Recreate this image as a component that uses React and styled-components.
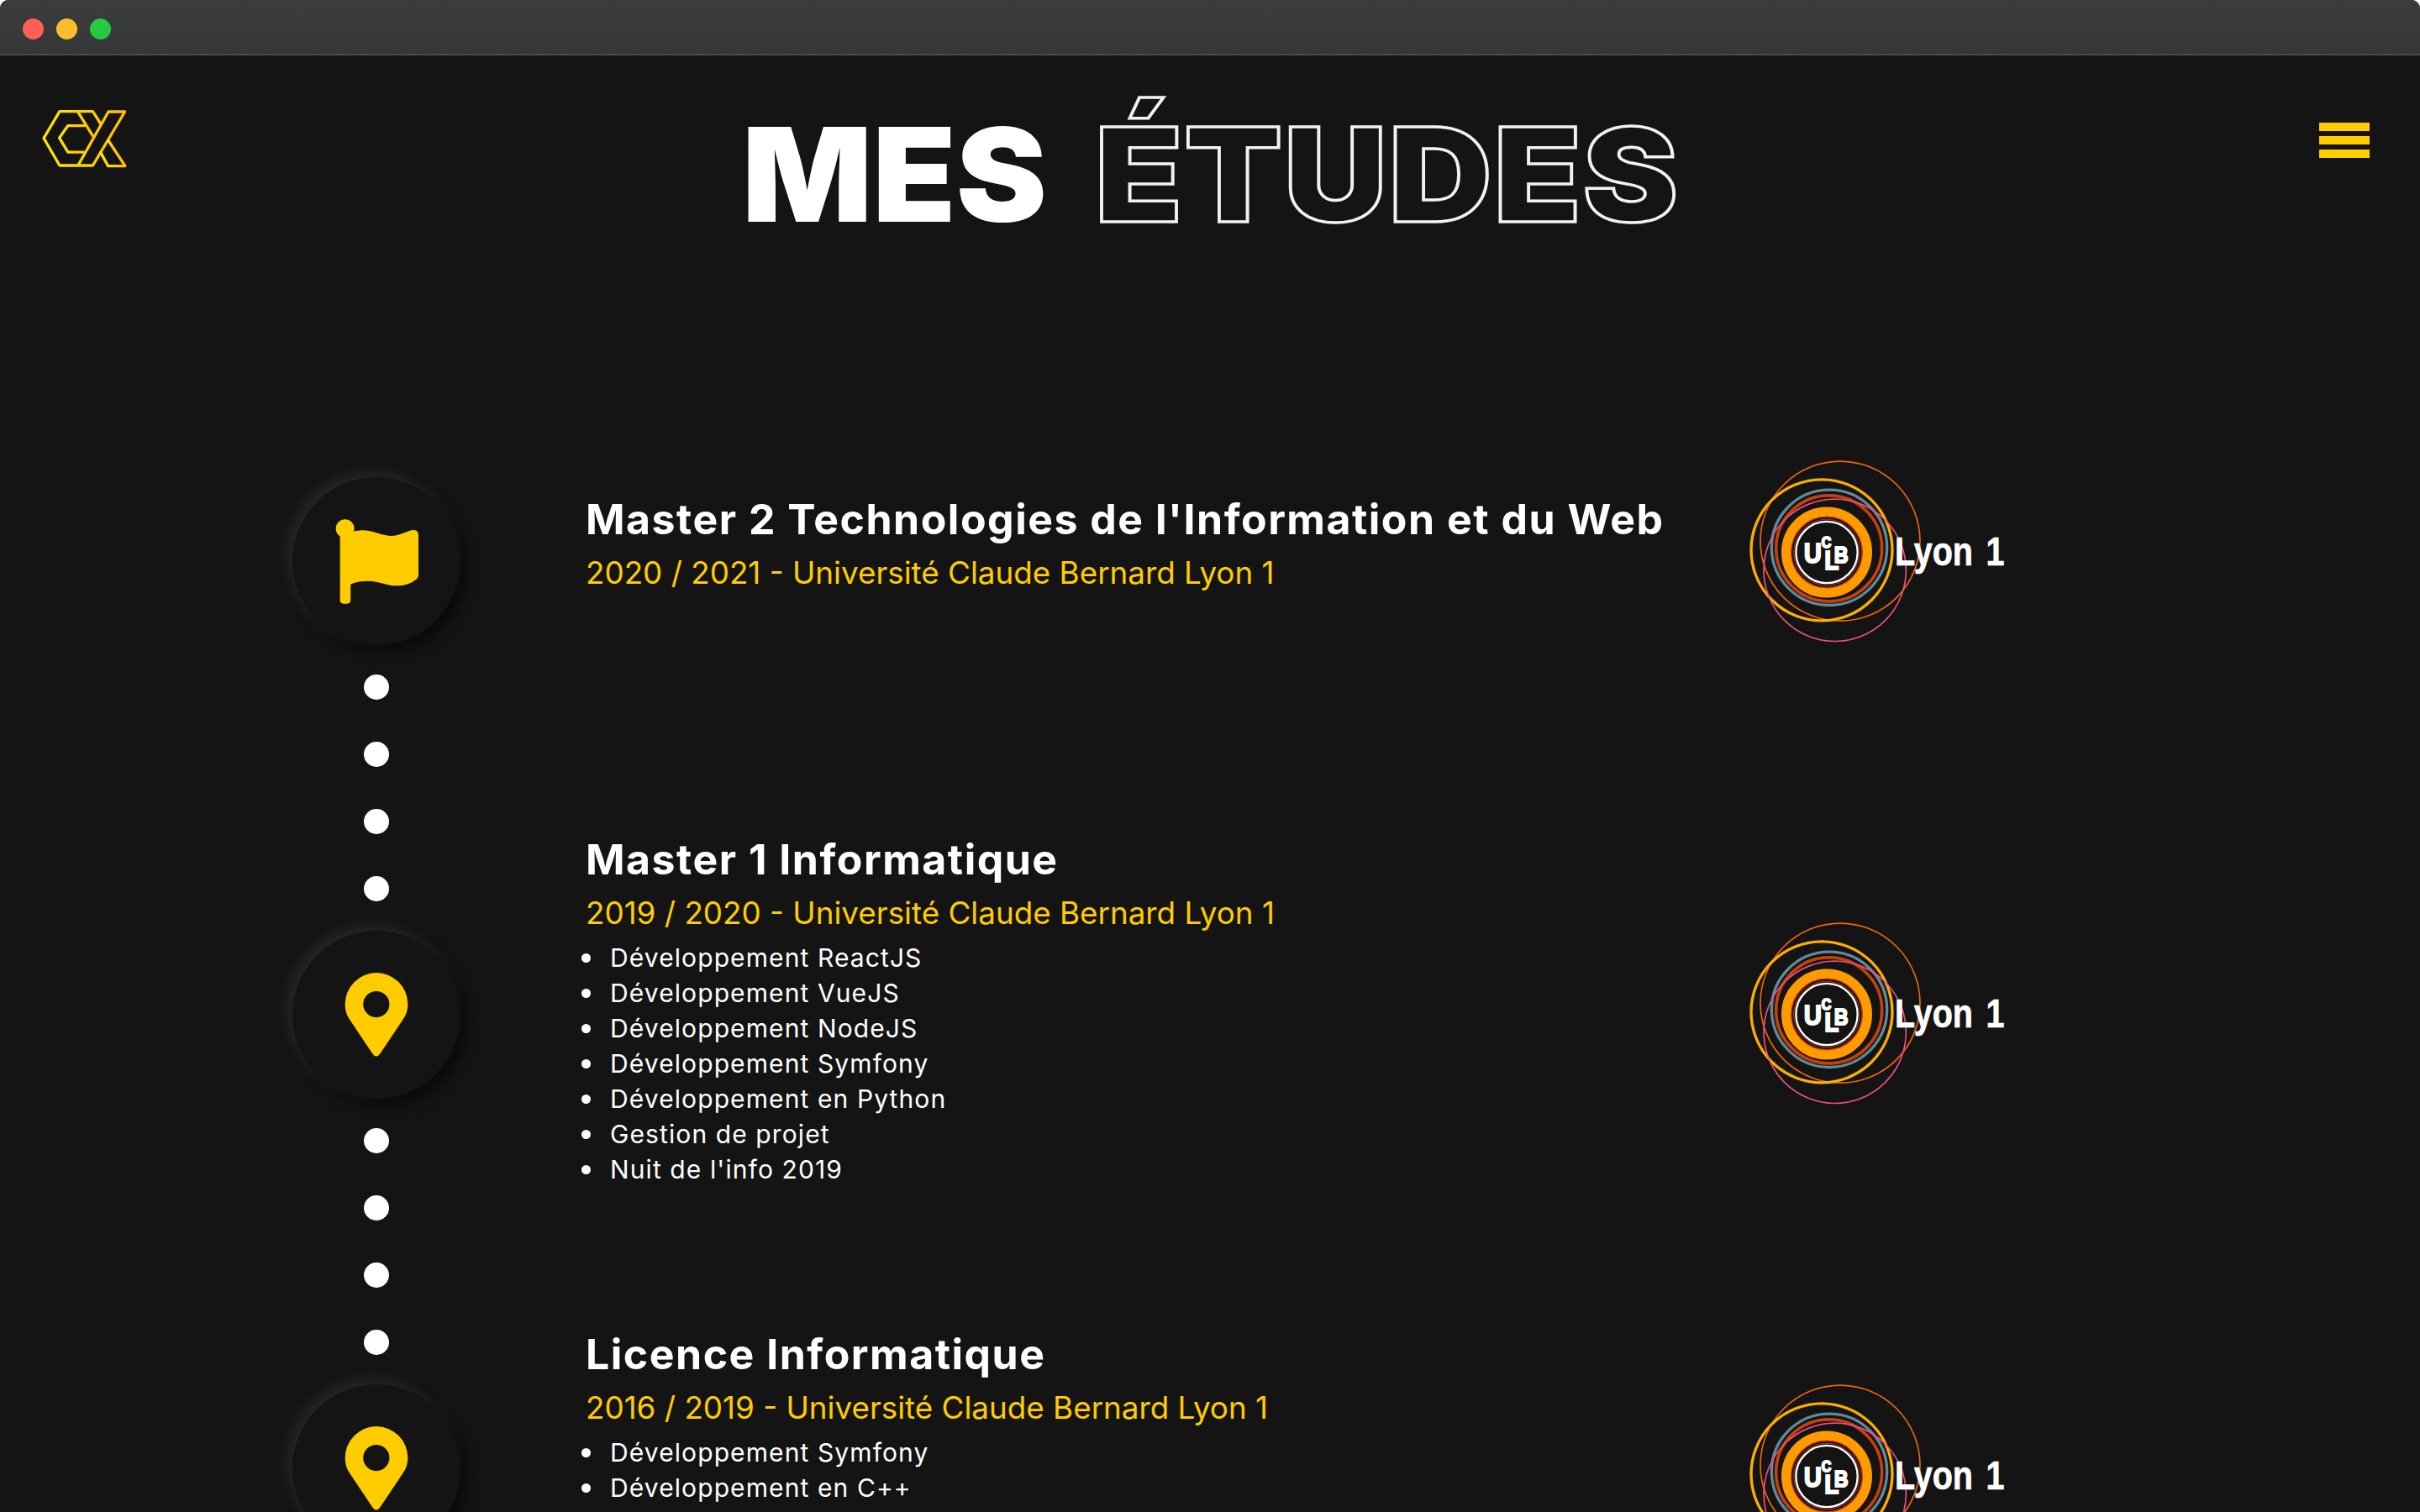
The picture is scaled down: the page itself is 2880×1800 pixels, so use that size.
import React from "react";
import styled, { createGlobalStyle } from "styled-components";

const Global = createGlobalStyle`
  html, body { margin: 0; padding: 0; background: #fff; }
  #root { height: 1800px; overflow: hidden; }
`;

const Window = styled.div`
  height: 1800px;
  overflow: hidden;
  background: #141414;
  border-radius: 10px 10px 0 0;
  font-family: Inter, "Open Sans", sans-serif;
  color: #fff;
`;

const TitleBar = styled.div`
  height: 66px;
  border-bottom: 2px solid #4a4b4d;
  background: linear-gradient(#3b3c3e, #363739);
  display: flex;
  align-items: center;
  gap: 15px;
  padding: 4px 0 0 27px;
  box-sizing: border-box;
`;

const Light = styled.span`
  width: 25px;
  height: 25px;
  border-radius: 50%;
  background: ${(p) => p.$color};
`;

const Header = styled.header`
  height: 317px;
  display: grid;
  grid-template-columns: 836px auto 1fr;
  align-items: start;
  padding: 0 60px 0 47px;
`;

const LogoLink = styled.a`
  display: block;
  margin-top: 62px;
  line-height: 0;
`;

const Title = styled.h1`
  margin: 64px 0 0;
  font-size: 155px;
  line-height: 1;
  font-weight: 900;
  white-space: nowrap;
  display: flex;
`;

const SolidWord = styled.span`
  display: inline-block;
  transform: scaleX(1.048);
  transform-origin: left center;
  margin-right: 74px;
`;

const Outline = styled.span`
  display: inline-block;
  color: transparent;
  -webkit-text-stroke: 3.5px #f2f2f2;
  letter-spacing: 1.5px;
  transform: scaleX(1.1);
  transform-origin: left center;
`;

const Burger = styled.button`
  justify-self: end;
  margin-top: 80px;
  padding: 0;
  border: 0;
  background: none;
  display: flex;
  flex-direction: column;
  gap: 6px;
`;

const BurgerBar = styled.span`
  display: block;
  width: 60px;
  height: 10px;
  background: #ffcc00;
`;

const Main = styled.main`
  display: flex;
  padding-left: 348px;
`;

const Timeline = styled.div`
  width: 200px;
  flex: none;
  padding-top: 185px;
  margin-right: 149px;
  display: flex;
  flex-direction: column;
  align-items: center;
`;

const Badge = styled.div`
  width: 200px;
  height: 200px;
  flex: none;
  border-radius: 50%;
  background: #141414;
  box-shadow: -6px -6px 16px rgba(255, 255, 255, 0.09),
    8px 8px 16px rgba(0, 0, 0, 0.55);
  display: flex;
  align-items: center;
  justify-content: center;
`;

const Dots = styled.div`
  display: flex;
  flex-direction: column;
  gap: 50px;
  padding: 35px 0;
`;

const Dot = styled.span`
  display: block;
  width: 30px;
  height: 30px;
  border-radius: 50%;
  background: #fff;
`;

const Rows = styled.div`
  flex: 1;
  display: flex;
  flex-direction: column;
`;

const Row = styled.section`
  height: 550px;
  flex: none;
  display: grid;
  grid-template-columns: 1383px auto;
  align-items: center;
`;

const Info = styled.div`
  display: flex;
  flex-direction: column;
`;

const Name = styled.h2`
  margin: 0;
  font-size: 50px;
  line-height: 60px;
  font-weight: 700;
  letter-spacing: 1.5px;
  white-space: nowrap;
`;

const Period = styled.p`
  margin: 4px 0 0;
  font-size: 36.8px;
  line-height: 60px;
  font-weight: 400;
  color: #ffcc00;
  white-space: nowrap;
`;

const List = styled.ul`
  margin: 2px 0 0 -5px;
  padding: 0 0 10px;
  box-sizing: border-box;
  list-style: none;
  min-height: ${(p) => p.$minHeight || "14px"};
  font-size: 30px;
  line-height: 42px;
  letter-spacing: 1.1px;
`;

const Item = styled.li`
  display: flex;
  align-items: center;
  gap: 23px;
  white-space: nowrap;

  &::before {
    content: "";
    width: 11px;
    height: 11px;
    flex: none;
    border-radius: 50%;
    background: #fff;
  }
`;

const LogoMark = styled.svg`
  margin-top: -3px;
`;

const CxLogo = () => (
  <svg width="107" height="73" viewBox="140 385 320 220" fill="none">
    <defs>
      <linearGradient id="cxg" x1="0" x2="1" y1="0" y2="0">
        <stop offset="0" stopColor="#ffe600" />
        <stop offset="1" stopColor="#ffbf00" />
      </linearGradient>
    </defs>
    <g stroke="url(#cxg)" strokeWidth="10" strokeLinejoin="round" strokeLinecap="round">
      <path d="M358 443L330 399H211L154 495L211 593H330L445 400H386L277 593H330" />
      <path d="M277 401L332 490M300 450H241L210 494L241 545H297" />
      <path d="M385 502L446 595H385L358 546" />
    </g>
  </svg>
);

const FlagIcon = () => (
  <svg width="103" height="103" viewBox="230 230 310 310" fill="#ffcc00">
    <circle cx="271" cy="267" r="33" />
    <path d="M253 285V523Q253 536 266 536H278Q291 536 291 523V466C340 447 380 455 420 467C460 478 500 470 527 448Q534 443 534 433V290Q534 272 515 272C490 275 470 293 435 293C400 293 370 272 330 273Q310 273 290 282Z" />
  </svg>
);

const PinIcon = () => (
  <svg width="76" height="101" viewBox="270 355 229 304" fill="#ffcc00" fillRule="evenodd">
    <path d="M384 355A113 113 0 0 1 497 468C497 490 490 508 480 522L398 645Q384 665 370 645L288 522C278 508 272 490 272 468A113 113 0 0 1 384 355ZM384 421A47 47 0 1 0 384 515A47 47 0 1 0 384 421Z" />
  </svg>
);

const LyonLogo = () => (
  <LogoMark width="320" height="217" viewBox="120 55 960 650" fill="none">
    <circle cx="450" cy="343" r="285" stroke="#f0650f" strokeWidth="5" />
    <circle cx="384" cy="375" r="252" stroke="#ffae00" strokeWidth="10" />
    <circle cx="411" cy="366" r="206" stroke="#5f8a9c" strokeWidth="10" />
    <circle cx="410" cy="369" r="189" stroke="#c4410c" strokeWidth="11" />
    <circle cx="402" cy="383" r="145" stroke="#ff9a00" strokeWidth="34" />
    <circle cx="402" cy="383" r="127" stroke="#d8420e" strokeWidth="4" />
    <circle cx="402" cy="383" r="118" stroke="#b8360c" strokeWidth="3" />
    <circle cx="402" cy="383" r="110" stroke="#fff" strokeWidth="7" />
    <circle cx="431" cy="447" r="254" stroke="#ea4f85" strokeWidth="5" />
    <g fill="#fff" stroke="#fff" fontFamily="'Liberation Sans', sans-serif" fontWeight="700">
      <text transform="translate(320 420) scale(1 1.15)" strokeWidth="5">
        <tspan x="0" y="0" fontSize="88">U</tspan>
        <tspan x="63" y="-46" fontSize="48">C</tspan>
        <tspan x="74" y="22" fontSize="84">L</tspan>
        <tspan x="108" y="0" fontSize="70">B</tspan>
      </text>
      <text transform="translate(645 430) scale(0.83 1)" fontSize="143" strokeWidth="2" wordSpacing="16">Lyon 1</text>
    </g>
  </LogoMark>
);

const Connector = () => (
  <Dots>
    <Dot />
    <Dot />
    <Dot />
    <Dot />
  </Dots>
);

const studies = [
  {
    name: "Master 2 Technologies de l'Information et du Web",
    period: "2020 / 2021 - Université Claude Bernard Lyon 1",
    items: [],
  },
  {
    name: "Master 1 Informatique",
    period: "2019 / 2020 - Université Claude Bernard Lyon 1",
    items: [
      "Développement ReactJS",
      "Développement VueJS",
      "Développement NodeJS",
      "Développement Symfony",
      "Développement en Python",
      "Gestion de projet",
      "Nuit de l'info 2019",
    ],
  },
  {
    name: "Licence Informatique",
    period: "2016 / 2019 - Université Claude Bernard Lyon 1",
    items: ["Développement Symfony", "Développement en C++"],
    reserve: "226px",
  },
];

export default function App() {
  return (
    <>
      <Global />
      <Window>
        <TitleBar>
          <Light $color="#ff5f57" />
          <Light $color="#ffbd2e" />
          <Light $color="#28c840" />
        </TitleBar>
        <Header>
          <LogoLink>
            <CxLogo />
          </LogoLink>
          <Title>
            <SolidWord>MES</SolidWord>
            <Outline>ÉTUDES</Outline>
          </Title>
          <Burger aria-label="Menu">
            <BurgerBar />
            <BurgerBar />
            <BurgerBar />
          </Burger>
        </Header>
        <Main>
          <Timeline>
            <Badge>
              <FlagIcon />
            </Badge>
            <Connector />
            <Badge>
              <PinIcon />
            </Badge>
            <Connector />
            <Badge>
              <PinIcon />
            </Badge>
          </Timeline>
          <Rows>
            {studies.map((s) => (
              <Row key={s.name}>
                <Info>
                  <Name>{s.name}</Name>
                  <Period>{s.period}</Period>
                  <List $minHeight={s.reserve}>
                    {s.items.map((i) => (
                      <Item key={i}>{i}</Item>
                    ))}
                  </List>
                </Info>
                <LyonLogo />
              </Row>
            ))}
          </Rows>
        </Main>
      </Window>
    </>
  );
}
